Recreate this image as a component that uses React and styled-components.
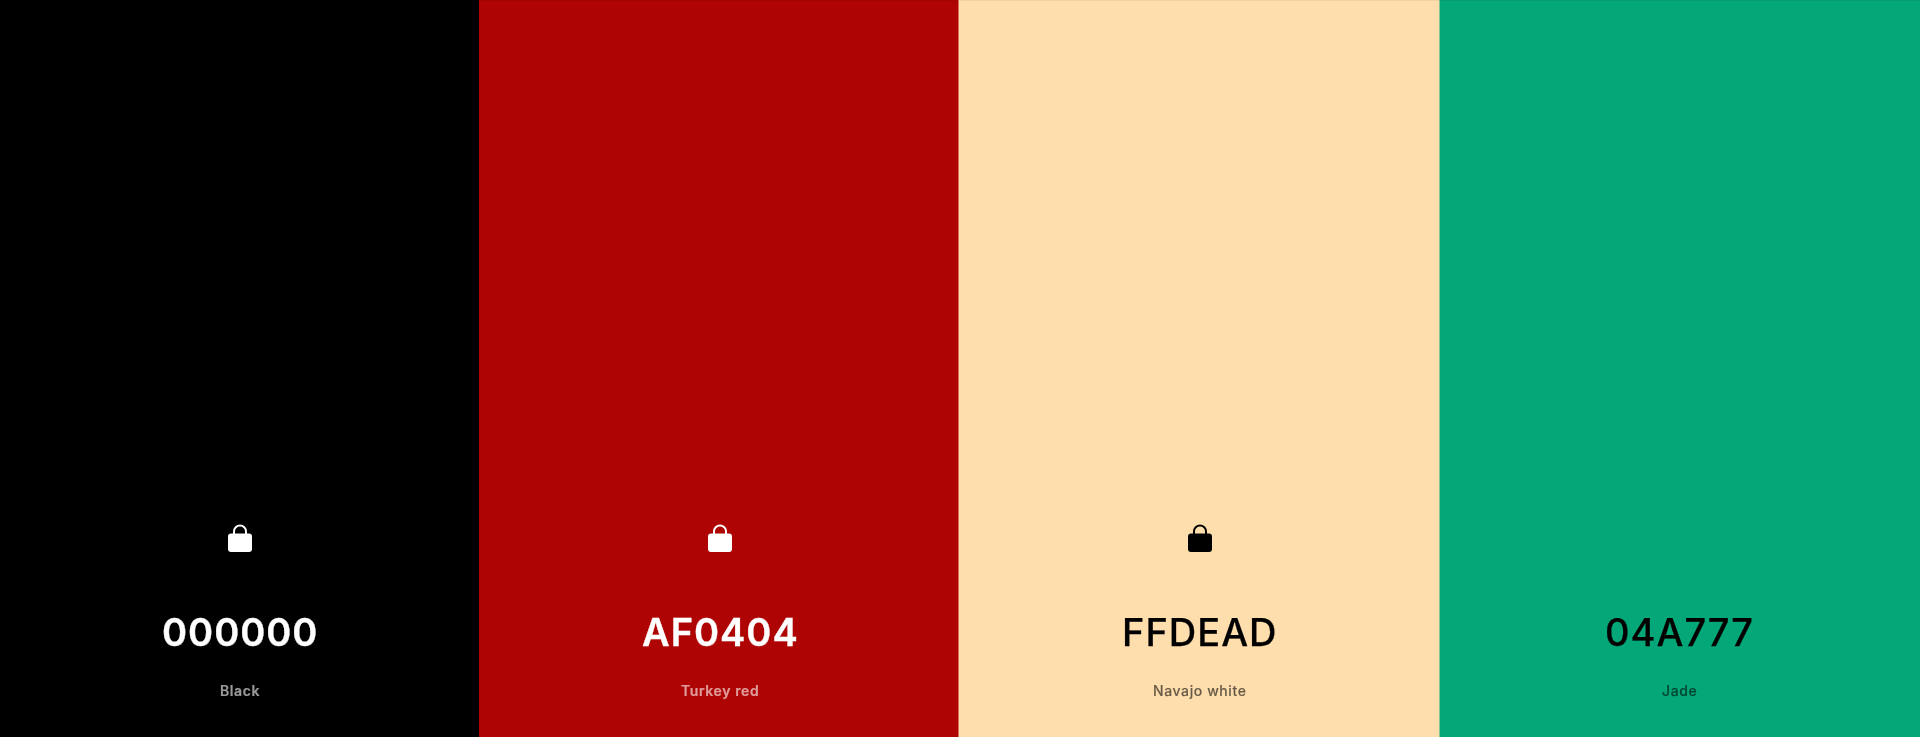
import styled, { createGlobalStyle } from 'styled-components';

const GlobalStyle = createGlobalStyle`
  html, body {
    margin: 0;
    padding: 0;
    height: 100%;
  }
  #root {
    height: 100%;
  }
`;

const Palette = styled.div`
  display: flex;
  width: 100%;
  height: 737px;
  overflow: hidden;
  font-family: Inter, "Liberation Sans", sans-serif;
`;

const Swatch = styled.div`
  flex: 1;
  display: flex;
  flex-direction: column;
  align-items: center;
  justify-content: flex-end;
  padding-bottom: 34px;
  box-sizing: border-box;
  background-color: ${(p) => p.$bg};
  color: ${(p) => (p.$dark ? '#fff' : '#000')};
  box-shadow: inset 0 1px 0 rgba(0, 0, 0, 0.06), ${(p) => p.$edge || 'none'};
`;

const LockSlot = styled.div`
  width: 32px;
  height: 32px;
  margin-bottom: 55px;
`;

const Hex = styled.div`
  font-size: 38px;
  line-height: 44px;
  letter-spacing: 1px;
  font-weight: ${(p) => (p.$dark ? 600 : 500)};
  -webkit-text-stroke: ${(p) => (p.$dark ? '0.35px' : '0.25px')} currentColor;
  margin-bottom: 25px;
  will-change: transform;
`;

const Name = styled.div`
  font-size: 14px;
  line-height: 24px;
  letter-spacing: 0.6px;
  font-weight: ${(p) => (p.$dark ? 600 : 500)};
  -webkit-text-stroke: 0.15px currentColor;
  opacity: 0.6;
  will-change: transform;
`;

const LockIcon = () => (
  <svg width="32" height="32" viewBox="0 0 32 32" fill="currentColor">
    <path d="M10 12V8.5a6 6 0 0 1 12 0V12" fill="none" stroke="currentColor" strokeWidth="2" />
    <rect x="4" y="10.5" width="24" height="18.5" rx="3" />
  </svg>
);

const colors = [
  { hex: '000000', name: 'Black', bg: '#000000', dark: true, locked: true },
  { hex: 'AF0404', name: 'Turkey red', bg: '#AF0404', dark: true, locked: true, edge: '-1px 0 0 #AF0404' },
  {
    hex: 'FFDEAD',
    name: 'Navajo white',
    bg: '#FFDEAD',
    dark: false,
    locked: true,
    edge: '-1px 0 0 #FFDEAD, -2px 0 0 #D77059',
  },
  { hex: '04A777', name: 'Jade', bg: '#04A777', dark: false, locked: false, edge: '-1px 0 0 #82C292' },
];

export default function App() {
  return (
    <>
      <GlobalStyle />
      <Palette>
        {colors.map((c) => (
          <Swatch key={c.hex} $bg={c.bg} $dark={c.dark} $edge={c.edge}>
            <LockSlot>{c.locked && <LockIcon />}</LockSlot>
            <Hex $dark={c.dark}>{c.hex}</Hex>
            <Name $dark={c.dark}>{c.name}</Name>
          </Swatch>
        ))}
      </Palette>
    </>
  );
}
